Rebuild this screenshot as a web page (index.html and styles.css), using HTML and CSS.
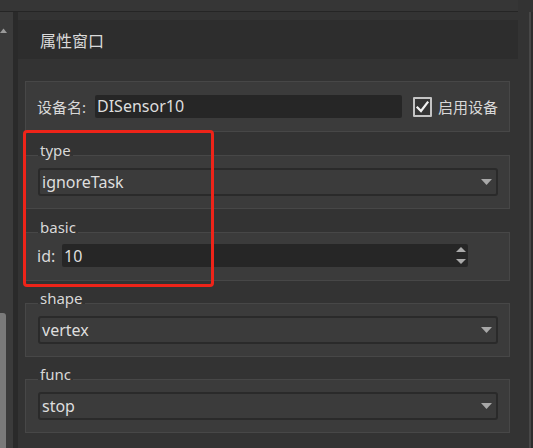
FILE: index.html
```html
<!DOCTYPE html>
<html>
<head>
<meta charset="utf-8">
<link rel="stylesheet" href="styles.css">
</head>
<body>
<div class="topbar"><div class="topline"></div></div>
<div class="main">
  <div class="vscroll">
    <svg class="vs-arrow" width="8" height="5" viewBox="0 0 8 5"><polygon points="0,5 3.5,0.5 7,5" fill="#9a9a9a"/></svg>
    <div class="vs-space"></div>
    <div class="vs-thumb"></div>
  </div>
  <div class="gutter"></div>
  <div class="panel">
    <div class="header">属性窗口</div>
    <div class="content">
      <div class="devbox">
        <span class="dev-label">设备名:</span>
        <div class="dev-input">DISensor10</div>
        <div class="checkbox">
          <svg width="15" height="16" viewBox="0 0 15 16"><polyline points="2.5,8.5 6,12 12.5,3.5" fill="none" stroke="#f2f2f2" stroke-width="2.2" stroke-linecap="square"/></svg>
        </div>
        <span class="cb-label">启用设备</span>
      </div>

      <div class="group">
        <div class="g-title"><span class="g-seg-l"></span><span class="g-text">type</span><span class="g-seg-r"></span></div>
        <div class="g-body">
          <div class="combo"><span>ignoreTask</span><svg width="11" height="6" viewBox="0 0 11 6"><polygon points="0,0 11,0 5.5,6" fill="#a8a8a8"/></svg></div>
        </div>
      </div>

      <div class="group">
        <div class="g-title"><span class="g-seg-l"></span><span class="g-text">basic</span><span class="g-seg-r"></span></div>
        <div class="g-body g-basic">
          <span class="id-label">id:</span>
          <div class="spin"><span>10</span>
            <svg width="12" height="20" viewBox="0 0 12 20"><polygon points="1,6 11,6 6,1" fill="#aaaaaa"/><polygon points="1,13 11,13 6,18" fill="#aaaaaa"/></svg>
          </div>
        </div>
      </div>

      <div class="group tight">
        <div class="g-title"><span class="g-seg-l"></span><span class="g-text">shape</span><span class="g-seg-r"></span></div>
        <div class="g-body">
          <div class="combo"><span>vertex</span><svg width="11" height="6" viewBox="0 0 11 6"><polygon points="0,0 11,0 5.5,6" fill="#a8a8a8"/></svg></div>
        </div>
      </div>

      <div class="group tight">
        <div class="g-title"><span class="g-seg-l"></span><span class="g-text">func</span><span class="g-seg-r"></span></div>
        <div class="g-body">
          <div class="combo"><span>stop</span><svg width="11" height="6" viewBox="0 0 11 6"><polygon points="0,0 11,0 5.5,6" fill="#a8a8a8"/></svg></div>
        </div>
      </div>
    </div>
  </div>
  <div class="rgap"></div>
  <div class="redge"></div>
  <div class="redge2"></div>
</div>
<div class="highlight"></div>
</body>
</html>
```

FILE: styles.css
```css
* { box-sizing: border-box; }
html, body { margin: 0; padding: 0; }
body {
  width: 533px;
  height: 448px;
  overflow: hidden;
  background: #333333;
  color: #d8d8d8;
  font-family: "Noto Sans", "Noto Sans CJK SC", sans-serif;
  font-size: 15px;
  position: relative;
}
.topbar { height: 12px; }
.topline {
  width: 518px;
  height: 12px;
  background: #363636;
  border-bottom: 1px solid #252525;
}
.main {
  display: flex;
  height: 436px;
}
.vscroll {
  width: 13px;
  background: #3b3b3b;
  display: flex;
  flex-direction: column;
}
.vs-arrow { display: block; margin-top: 16px; }
.vs-space { flex: 1; }
.vs-thumb {
  width: 6px;
  height: 135px;
  background: #7a7a7a;
  border-radius: 0 3px 0 0;
}
.gutter { width: 5px; background: #2a2a2a; }
.panel { width: 500px; padding-top: 8px; }
.rgap { width: 11px; }
.redge { width: 2px; background: #474747; }
.redge2 { width: 2px; background: #2d2d2d; }

.header {
  height: 39px;
  background: #2d2d2d;
  display: flex;
  align-items: center;
  padding-left: 22px;
  font-size: 16px;
  color: #dadada;
}
.content { padding: 22px 8px 0 7px; }

.devbox {
  height: 51px;
  border: 1px solid #474747;
  background: #3b3b3b;
  display: flex;
  align-items: center;
  padding: 0 11px;
}
.dev-label { width: 58px; }
.dev-input {
  width: 307px;
  height: 23px;
  background: #262626;
  border-radius: 2px;
  padding-left: 2px;
  line-height: 23px;
  font-size: 16px;
  color: #dedede;
}
.checkbox {
  width: 19px;
  height: 20px;
  margin-left: 11px;
  border: 2px solid #c4c4c4;
  border-radius: 1px;
  background: #353535;
  display: flex;
  align-items: center;
  justify-content: center;
}
.checkbox svg { display: block; }
.cb-label { margin-left: 6px; }

.g-title {
  height: 24px;
  display: flex;
  align-items: flex-end;
}
.group.tight .g-title { height: 23px; }
.g-seg-l, .g-seg-r {
  align-self: stretch;
  border-bottom: 1px solid #474747;
}
.g-seg-l { width: 13px; }
.g-seg-r { flex: 1; }
.g-text {
  padding: 0 2px;
  line-height: 15px;
  margin-bottom: -2px;
}
.g-body {
  border: 1px solid #474747;
  border-top: none;
  background: #3b3b3b;
  padding: 12px 11px 12px 12px;
}
.combo {
  height: 28px;
  border: 2px solid #2a2a2a;
  border-radius: 3px;
  background: #3b3b3b;
  display: flex;
  align-items: center;
  justify-content: space-between;
  padding: 0 4px 0 2px;
  font-size: 16px;
  color: #dedede;
}
.combo svg { display: block; }
.g-basic {
  display: flex;
  align-items: center;
  padding: 11px 11px 13px 11px;
}
.id-label { width: 25px; font-size: 16px; }
.spin {
  width: 406px;
  height: 23px;
  background: #262626;
  border-radius: 2px;
  display: flex;
  align-items: center;
  justify-content: space-between;
  padding: 0 1px 0 2px;
  font-size: 16px;
  color: #dedede;
}
.spin svg { display: block; }

.highlight {
  position: absolute;
  left: 23px;
  top: 130px;
  width: 191px;
  height: 157px;
  border: 3px solid #ee2419;
  border-radius: 4px;
}
```
